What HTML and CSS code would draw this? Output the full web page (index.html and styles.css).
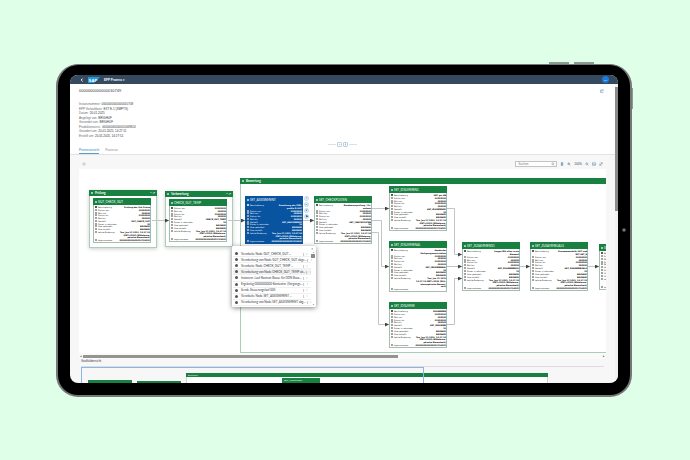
FILE: index.html
```
<!DOCTYPE html>
<html lang="de">
<head>
  <meta charset="UTF-8" />
  <meta name="viewport" content="width=device-width, initial-scale=1.0"/>
  <title>EPP Prozess</title>
  <link rel="stylesheet" href="styles.css">
</head>
<body>
  <div class="tablet">
    <span class="hw-button volume-up"></span>
    <span class="hw-button volume-down"></span>
    <span class="hw-button power"></span>
    <span class="camera"></span>

    <div class="screen">
      <header class="shell">
        <button class="back" aria-label="Zurück">
          <svg viewBox="0 0 4 4"><path d="M2.6 .6 1.2 2l1.4 1.4"/></svg>
        </button>
        <svg class="logo" viewBox="0 0 20 10" role="img" aria-label="SAP">
          <path d="M0 0h20L10 10H0z" fill="#1e9be0"/>
          <text x="1" y="8">SAP</text>
        </svg>
        <button class="app-title">EPP Prozess ▾</button>
        <button class="avatar" aria-label="Profil">MK</button>
      </header>

      <div class="page">
        <div class="content">
          <section class="object-header">
            <div class="title-row">
              <h1>0000000000000010749</h1>
              <button class="icon" aria-label="Teilen">
                <svg viewBox="0 0 8 8"><path d="M4 2H1v5h5V5M3 5c0-2 1-3 4-3M5.500 .5 7 2 5.500 3.500"/></svg>
              </button>
            </div>
            <dl class="facts">
              <div><dt>Instanznummer:</dt><dd>0000000000000010749</dd></div>
              <div><dt>EPP Vorlaufdatei:</dt><dd>EXT E-1 (XMPTS)</dd></div>
              <div><dt>Datum:</dt><dd>20.01.2025</dd></div>
              <div><dt>Angelegt von:</dt><dd>BRIGHUF</dd></div>
              <div><dt>Gesendet von:</dt><dd>BRIGHUF</dd></div>
              <div><dt>Produktionsinst.:</dt><dd>00000000000001069924</dd></div>
              <div><dt>Geändert am:</dt><dd>20.01.2025, 14:27:11</dd></div>
              <div><dt>Erstellt am:</dt><dd>20.01.2025, 14:27:51</dd></div>
            </dl>
            <div class="snap">
              <span></span>
              <button aria-label="Kopf einklappen"><svg viewBox="0 0 6 6"><path d="M1.500 4 3 2.300 4.500 4"/></svg></button>
              <button aria-label="Kopf anheften"><svg viewBox="0 0 6 6"><path d="M2 1.500h2M3 1.500v3M1.800 3.500h2.400"/></svg></button>
              <span></span>
            </div>
            <nav class="tabs">
              <a class="active" href="#ansicht">Prozessansicht</a>
              <a href="#prozess">Prozesse</a>
            </nav>
          </section>

          <div class="toolbar">
            <button class="icon pale" aria-label="Einstellungen"><svg viewBox="0 0 8 8"><circle cx="4" cy="4" r="2.500"/><circle cx="4" cy="4" r="1"/></svg></button>
            <span class="spacer"></span>
            <label class="search">
              <input type="search" placeholder="Suchen" aria-label="Suchen">
              <svg viewBox="0 0 8 8"><circle cx="3.500" cy="3.500" r="2"/><path d="M5 5l2 2"/></svg>
            </label>
            <button class="icon" aria-label="Legende"><svg viewBox="0 0 8 8"><path d="M2.500 1h3v6h-3zM2.500 3h3M2.500 5h3M4 1v6"/></svg></button>
            <button class="icon" aria-label="Vergrößern"><svg viewBox="0 0 8 8"><circle cx="3.500" cy="3.500" r="2"/><path d="M5 5l2 2M2.500 3.500h2M3.500 2.500v2"/></svg></button>
            <button class="zoom-level">100%</button>
            <button class="icon" aria-label="Verkleinern"><svg viewBox="0 0 8 8"><circle cx="3.500" cy="3.500" r="2"/><path d="M5 5l2 2M2.500 3.500h2"/></svg></button>
            <button class="icon" aria-label="Einpassen"><svg viewBox="0 0 8 8"><path d="M1 1.500h6v5H1zM1 5.500l2-2 2 2 1-1 1 1"/></svg></button>
            <button class="icon" aria-label="Vollbild"><svg viewBox="0 0 8 8"><path d="M1.500 3v3.500H5M3 1.500h3.500V5M1.500 6.500l5-5"/></svg></button>
          </div>

          <main class="canvas" id="canvas">
            <section class="group pruefung"><h2>Prüfung<span>— ↗</span></h2></section>
            <section class="group vorbereitung"><h2>Vorbereitung<span>— ↗</span></h2></section>
            <section class="group bewertung"><h2>Bewertung</h2></section>
            <svg class="edges" width="527" height="185" viewBox="79 168 527 185">
              <defs>
                <marker id="arrow" viewBox="0 0 4 4" refX="4" refY="2" markerWidth="4" markerHeight="4" markerUnits="userSpaceOnUse"><path d="M0 0l4 2-4 2z"/></marker>
              </defs>
              <g marker-end="url(#arrow)">
                <path d="M152 219.500H169"/>
                <path d="M228 219.500H245"/>
                <path d="M303 219.500H314"/>
                <path d="M372 207.500H389"/>
                <path d="M372 219.500H381.500V265.500H389"/>
                <path d="M372 231.500H378.500V323.500H389"/>
                <path d="M447 207.500H454.500V253.500H462"/>
                <path d="M447 265.500H462"/>
                <path d="M447 323.500H454.500V277.500H462"/>
                <path d="M520 265.500H530"/>
                <path d="M588 265.500H599"/>
              </g>
            </svg>
            <div class="node-actions">
              <button aria-label="Info">i</button>
              <button aria-label="Protokoll">≡</button>
              <button aria-label="Wiederholen">●</button>
              <button aria-label="Starten">▶</button>
            </div>

            <aside class="log">
              <div class="log-head"><button aria-label="Schließen">×</button></div>
              <div class="log-body">
                <ul>
                  <li>Verarbeite Node GUT_CHECK_GUT ...</li>
                  <li>Verarbeitung von Node GUT_CHECK_GUT abge...</li>
                  <li>Verarbeite Node CHECK_GUT_TEMP ...</li>
                  <li class="hover">Verarbeitung von Node CHECK_GUT_TEMP ab...</li>
                  <li>Instanznr. Lauf Kontext Bause für DDN Baus...</li>
                  <li>Ergebnisg 0000000000 Kontextnr. (Vorgangs...</li>
                  <li>Sende Steuerungslauf 005</li>
                  <li>Verarbeite Node SET_ASSIGNMENT ...</li>
                  <li>Verarbeitung von Node SET_ASSIGNMENT abg...</li>
                </ul>
                <div class="log-scroll"><span>▴</span><i></i><span>▾</span></div>
              </div>
            </aside>
          </main>

          <div class="hscroll"><span>◂</span><i></i><span>▸</span></div>
          <h3 class="overview-title">Grafikübersicht</h3>
          <div class="overview">
            <div class="mini mini-pruefung"></div>
            <div class="mini mini-vorbereitung"></div>
            <div class="mini-group"><div>Bewertung</div></div>
            <div class="mini mini-node">SET_ASSIGNMENT</div>
            <div class="viewport"></div>
          </div>
        </div>
        <div class="vscroll"><i></i></div>
      </div>
    </div>
  </div>

  <script src="script.js"></script>
</body>
</html>
```
FILE: styles.css
```
* {
  box-sizing: border-box;
}

body {
  margin: 0;
  height: 100vh;
  padding: 64px 58px 63px 56px;
  background: #e0ffe8;
  color: #32363a;
  font-family: "Liberation Sans", Arial, sans-serif;
  font-size: 3px;
  line-height: 4px;
}

h1, h2, h3, dl, dd, ul {
  margin: 0;
  padding: 0;
}

button {
  border: 0;
  padding: 0;
  background: none;
  color: inherit;
  font: inherit;
}

svg {
  display: block;
  fill: none;
  stroke: currentColor;
}

/* device */
.tablet {
  position: relative;
  height: 100%;
  padding: 10px 12px 12px 12px;
  border: 2px solid #777;
  border-top-width: 1px;
  border-radius: 22px;
  background: #000;
}

.hw-button {
  position: absolute;
  background: #8d9a91;
}

.volume-up,
.volume-down {
  top: -3px;
  width: 20px;
  height: 2px;
}

.volume-up {
  right: 61px;
}

.volume-down {
  right: 36px;
}

.power {
  top: 23px;
  right: -3px;
  width: 1px;
  height: 21px;
}

.camera {
  position: absolute;
  top: 163px;
  right: 4px;
  width: 4px;
  height: 4px;
  border: 1px solid #444;
  border-radius: 50%;
  background: #889;
}

.screen {
  display: flex;
  flex-direction: column;
  height: 100%;
  border-radius: 8px;
  overflow: hidden;
  background: #f7f7f7;
}

/* shell bar */
.shell {
  display: flex;
  align-items: center;
  flex: none;
  height: 9px;
  padding: 0 9px 0 10px;
  background: #354a5f;
  color: #fff;
}

.back svg {
  width: 4px;
  height: 4px;
  stroke-width: 1;
}

.logo {
  width: 12px;
  height: 6px;
  margin-left: 4px;
  stroke: none;
}

.logo text {
  fill: #fff;
  font-size: 7px;
  font-weight: bold;
}

.app-title {
  margin-left: 4px;
  font-weight: bold;
}

.avatar {
  width: 7px;
  height: 7px;
  margin-left: auto;
  border-radius: 50%;
  background: #1d7ad6;
  font-size: 2px;
}

.page {
  display: flex;
  flex: 1;
  min-height: 0;
}

.content {
  display: flex;
  flex: 1;
  flex-direction: column;
  min-width: 0;
}

/* object header */
.object-header {
  padding: 4px 9px 0;
  border-bottom: 1px solid #e3e3e3;
  background: #fff;
}

.title-row {
  display: flex;
  align-items: center;
  justify-content: space-between;
  height: 6px;
}

h1 {
  font-size: 4px;
  font-weight: normal;
}

.icon {
  width: 4px;
  height: 4px;
  color: #6486a8;
}

.icon svg {
  width: 4px;
  height: 4px;
}

.title-row .icon {
  margin-right: 2px;
}

.pale {
  color: #a9b4bf;
}

.facts {
  display: flex;
  flex-direction: column;
  height: 36px;
  margin-top: 8px;
}

.facts div {
  display: flex;
  flex: 1;
  gap: 1px;
  min-height: 0;
}

.facts dt {
  color: #6a6d70;
}

.snap {
  display: flex;
  align-items: center;
  justify-content: center;
  gap: 1px;
  height: 5px;
  margin-top: 4px;
}

.snap span {
  width: 8px;
  height: 1px;
  background: #d5e2ec;
}

.snap button {
  width: 5px;
  height: 5px;
  border: 1px solid #bdd0de;
  border-radius: 1px;
  color: #7fa8c9;
}

.tabs {
  display: flex;
  gap: 6px;
}

.tabs a {
  padding: 1px 0;
  border-bottom: 1px solid transparent;
  color: #8a8d90;
  text-decoration: none;
}

.tabs .active {
  border-color: #5b9bcb;
  color: #2f7fb8;
}

/* toolbar */
.toolbar {
  display: flex;
  align-items: center;
  gap: 4px;
  height: 14px;
  padding: 4px 12px 0;
}

.spacer {
  flex: 1;
}

.search {
  display: flex;
  align-items: center;
  width: 42px;
  height: 6px;
  padding: 0 1px 0 2px;
  border: 1px solid #c4c4c4;
  background: #fff;
  color: #6486a8;
}

.search input {
  flex: 1;
  min-width: 0;
  height: 4px;
  padding: 0;
  border: 0;
  outline: 0;
  background: none;
  font: inherit;
}

.search svg {
  width: 4px;
  height: 4px;
}

.search ~ .icon,
.zoom-level {
  margin-left: -1px;
}

/* process canvas */
.canvas {
  position: relative;
  flex: 1;
  min-height: 0;
  margin: 0 9px;
  overflow: hidden;
  background: #fff;
}

.group,
.node,
.edges,
.node-actions,
.log {
  position: absolute;
}

.group {
  border: 1px solid #a9cfb8;
  background: #fff;
  box-shadow: 0 1px 4px rgba(0,0,0,0.2);
}

.group h2 {
  display: flex;
  align-items: center;
  gap: 2px;
  height: 6px;
  margin: -1px -1px 0;
  padding: 0 2px;
  background: #188041;
  color: #fff;
  font-family: Lato, "Liberation Sans", sans-serif;
  font-size: 3px;
  line-height: 4px;
}

.group h2::before,
.node h4::before {
  content: "";
  flex: none;
  width: 2px;
  height: 2px;
  background: #9fcbb0;
}

.group h2 span {
  margin-left: auto;
}

.pruefung {
  left: 10px;
  top: 21px;
  width: 68px;
  height: 58px;
}

.vorbereitung {
  left: 86px;
  top: 22px;
  width: 68px;
  height: 56px;
}

.bewertung {
  left: 161px;
  top: 9px;
  width: 380px;
  height: 175px;
  box-shadow: none;
}

.edges {
  left: 0;
  top: 0;
  stroke: #c2c4c6;
}

.edges marker path {
  fill: #444;
  stroke: none;
}

.node {
  display: flex;
  flex-direction: column;
  width: 58px;
  border: 1px solid #a6bdb0;
  background: #fff;
  font-family: "DejaVu Sans", sans-serif;
}

.node h4 {
  display: flex;
  align-items: center;
  flex: none;
  gap: 1px;
  height: 7px;
  margin: -1px -1px 1px;
  padding: 0 2px;
  background: #188041;
  color: #fff;
  font-family: Lato, "Liberation Sans", sans-serif;
  font-size: 3px;
  font-weight: normal;
  line-height: 4px;
  white-space: nowrap;
}

.node dl {
  display: flex;
  flex: 1;
  flex-direction: column;
  min-height: 0;
  font-size: 2px;
  line-height: 3px;
}

.node dl div {
  display: flex;
  flex: 1;
  justify-content: space-between;
  min-height: 0;
  white-space: nowrap;
}

.node dt {
  display: flex;
  gap: 1px;
  color: #222;
}

.node dt::before {
  content: "";
  width: 2px;
  height: 2px;
  margin-left: 1px;
  background: #a0a3a6;
}

.node dt:empty::before {
  background: none;
}

.node div:first-child dt::before {
  border-radius: 50%;
  background: #222;
}

.node dd {
  color: #000;
  font-weight: bold;
}

.node.selected,
.node.selected h4 {
  border-color: #0854a0;
  background: #0854a0;
}

.node.selected dt,
.node.selected dd {
  color: #fff;
}

.node.selected div:first-child dt::before {
  background: #fff;
}

.node-actions {
  left: 225px;
  top: 27px;
  display: flex;
  flex-direction: column;
  gap: 1px;
}

.node-actions button {
  width: 5px;
  height: 5px;
  border: 1px solid #c3d6ea;
  border-radius: 50%;
  background: #eaf2fa;
  color: #0854a0;
  line-height: 3px;
}

/* log popover */
.log {
  left: 153px;
  top: 77px;
  width: 84px;
  height: 61px;
  padding: 1px;
  border-radius: 1px;
  background: #fff;
  box-shadow: 0 1px 5px rgba(0,0,0,0.5);
}

.log-head {
  display: flex;
  justify-content: flex-end;
  height: 4px;
  padding-right: 2px;
}

.log-body {
  display: flex;
  height: 55px;
}

.log ul {
  display: flex;
  flex: 1;
  flex-direction: column;
  min-width: 0;
  list-style: none;
}

.log li {
  display: flex;
  align-items: center;
  flex: 1;
  min-height: 0;
  padding-left: 2px;
  border-bottom: 1px solid #f0f0f0;
  font-family: Lato, "Liberation Sans", sans-serif;
  white-space: nowrap;
}

.log li::before {
  content: "";
  flex: none;
  width: 3px;
  height: 3px;
  margin-right: 3px;
  border-radius: 50%;
  background: #51565b;
}

.log li::after {
  content: "⋮  ›";
  width: 9px;
  margin-left: auto;
  white-space: pre;
}

.log .hover {
  background: #f3f3f3;
}

.log-scroll {
  display: flex;
  flex-direction: column;
  width: 4px;
  font-size: 2px;
  line-height: 3px;
  text-align: center;
}

.log-scroll i {
  height: 4px;
  background: #8c8c8c;
}

.log-scroll span:last-child {
  margin-top: auto;
}

/* scrollbars */
.hscroll {
  display: flex;
  align-items: center;
  height: 6px;
  margin: 0 9px;
  padding: 0 1px;
  background: #fafafa;
}

.hscroll i {
  width: 60%;
  height: 3px;
  margin-left: 1px;
  background: #949490;
}

.hscroll span:last-child {
  margin-left: auto;
}

.vscroll {
  width: 3px;
  padding-top: 3px;
  background: #f1f1f1;
}

.vscroll i {
  display: block;
  height: 42%;
  background: #8b8b8b;
}

/* overview */
.overview-title {
  height: 7px;
  padding: 0 11px;
  font-size: 3px;
  font-weight: normal;
}

.overview {
  position: relative;
  height: 17px;
  margin: 0 11px;
  border-top: 1px solid #ddd;
  overflow: hidden;
}

.viewport,
.mini,
.mini-group {
  position: absolute;
}

.viewport {
  left: 0;
  top: 0;
  width: 343px;
  height: 20px;
  border: 1px solid #8db4e6;
}

.mini,
.mini-group div {
  height: 5px;
  padding-left: 2px;
  background: #188041;
  color: #fff;
  font-size: 2px;
}

.mini-pruefung {
  left: 7px;
  top: 13px;
  width: 44px;
}

.mini-vorbereitung {
  left: 56px;
  top: 14px;
  width: 44px;
}

.mini-group {
  left: 105px;
  top: 6px;
  width: 362px;
  height: 14px;
  border: 1px solid #c5dccd;
  background: #fff;
}

.mini-group div {
  height: 4px;
  margin: -1px -1px 0;
}

.mini-node {
  left: 201px;
  top: 11px;
  width: 38px;
}
```
FILE: script.js
```
const labels = ['Datum von', 'Zeit von', 'Datum bis', 'Zeit bis', 'Gestellt', 'Dauer in sekunden', 'User geändert', 'User erstellt'];

// left / top / height are canvas coordinates
const nodes = [
  { name: 'GUT_CHECK_GUT', left: 14, top: 29, height: 45, text: ['Prüfung der Gut Preise'] },
  { name: 'CHECK_GUT_TEMP', left: 90, top: 30, height: 43, text: [] },
  { name: 'SET_ASSIGNMENT', left: 166, top: 27, height: 48, text: ['Zuordnung der XML-', 'profile D-GUT'], selected: true },
  { name: 'SET_CHECKPOSTEN', left: 235, top: 27, height: 48, text: ['Kundenausprüfung / Zu-', 'ordnen'] },
  { name: 'SET_IDSUMMEN1', left: 310, top: 17, height: 45, text: ['SET gui AB'] },
  { name: 'SET_IDSUMMENAL', left: 310, top: 72, height: 51, text: ['Sende der', 'Fertigungsnachrichten'], split: true },
  { name: 'SET_ZUSAMMENG1', left: 383, top: 73, height: 49, text: ['Langer/Mit alles in ein', 'Element'] },
  { name: 'SET_ZUSAMMEUALS', left: 451, top: 73, height: 49, text: ['Zusammenstelle GUT und', 'MIT SET_B'] },
  { name: 'SET_IDSUMME', left: 310, top: 133, height: 46, text: ['ZUSAMMEN'] },
  { name: 'SET_ENDE', left: 520, top: 75, height: 46, text: ['Ende'] }
];

function row(label, value) {
  return `<div><dt>${label}</dt><dd>${value}</dd></div>`;
}

function nodeBody(node) {
  const values = ['00000000', '000000', '00000000', '000000', node.name, '10', 'BRIGHUF', 'BRIGHUF'];
  const changed = node.split
    ? ['Tue, Jan 21 2025', '14:27:14 GMT+0100 (Mitt-', 'eleuropäische Normal-', 'zeit)']
    : ['Tue, Jan 21 2025, 14:27:14', 'GMT+0100 (Mitteleuro-', 'päische Normalzeit)'];
  let html = '';
  if (node.text.length) {
    html += row('Beschreibung', node.text[0]);
    node.text.slice(1).forEach(line => html += row('', line));
  }
  labels.forEach((label, i) => html += row(label, values[i]));
  changed.forEach((line, i) => html += row(i ? '' : 'Letzte Änderung', line));
  html += row('Logsummierer', node.split ? '' : '0000000000000010749001');
  return html;
}

const canvas = document.getElementById('canvas');
const edges = canvas.querySelector('.edges');

nodes.forEach(node => {
  const el = document.createElement('article');
  el.className = node.selected ? 'node selected' : 'node';
  el.style.left = node.left + 'px';
  el.style.top = node.top + 'px';
  el.style.height = node.height + 'px';
  el.innerHTML = `<h4>${node.name}</h4><dl>${nodeBody(node)}</dl>`;
  canvas.insertBefore(el, edges);
});
```
